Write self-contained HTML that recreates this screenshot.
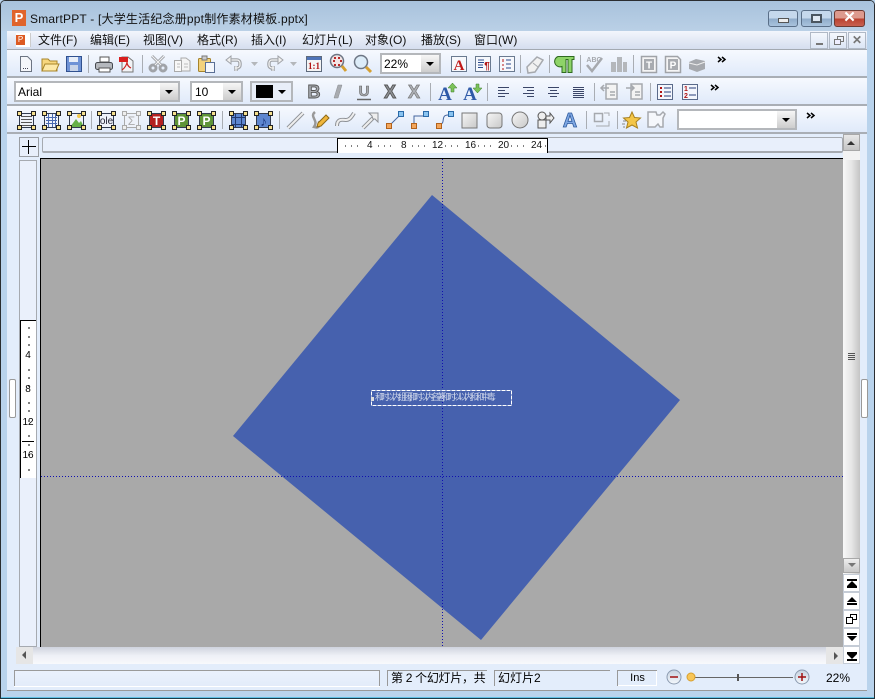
<!DOCTYPE html>
<html><head><meta charset="utf-8"><style>
html,body{margin:0;padding:0;width:875px;height:699px;overflow:hidden;background:#b9d3ec}
*{box-sizing:border-box}
div{position:absolute}
body{font-family:"Liberation Sans","Noto Sans CJK SC",sans-serif;color:#000}
.m{top:32px;font-size:12px;line-height:16px;white-space:nowrap;color:#101010}
.tb{left:7px;width:860px;background:linear-gradient(#f6f9fe,#e0eafa);border-bottom:2px solid #a9aeb5}
.cb{background:#fff;border:2px solid #b4b7bb}
.dd{position:absolute;top:0;right:0;bottom:0;width:18px;background:linear-gradient(#f6f6f6,#cdcdcd)}
.dd:after{content:"";position:absolute;left:5px;top:7px;border:4px solid transparent;border-top:4px solid #000;border-bottom:0}
.wb{top:10px;height:17px;border:1px solid #5a6f88;border-radius:3px}
.mb{top:32px;width:18px;height:17px;border:1px solid #b0b9c6;background:linear-gradient(#f5f8fd,#dbe5f5)}
.nv{left:843px;width:17px;height:18px;background:#fff;border:1px solid #c5ccd6}
</style></head><body>
<div style="left:0;top:0;width:875px;height:699px;background:#b9d3ec;border:1px solid #2a2d30;border-radius:5px 5px 0 0;border-bottom:1px solid #1c3b4a"></div>
<div style="left:1px;top:697px;width:873px;height:1px;background:#5fc0e4"></div>
<div style="left:1px;top:1px;width:873px;height:30px;background:linear-gradient(#a8c2dc,#bad0e6);border-radius:4px 4px 0 0"></div>
<div style="left:12px;top:10px;width:14px;height:16px;background:#e0642c;color:#fff;font-size:13px;font-weight:bold;line-height:15px;text-align:center">P</div>
<div style="left:30px;top:11px;font-size:12px;letter-spacing:.2px;line-height:16px;white-space:nowrap;color:#111">SmartPPT - [大学生活纪念册ppt制作素材模板.pptx]</div>
<div class="wb" style="left:768px;width:30px;background:linear-gradient(#c5d8ec 50%,#8eabc9 50%,#a9c3dd)"><div style="left:9px;top:7px;width:11px;height:5px;background:#eee;border:1px solid #555"></div></div>
<div class="wb" style="left:801px;width:31px;background:linear-gradient(#c5d8ec 50%,#8eabc9 50%,#a9c3dd)"><div style="left:9px;top:3px;width:11px;height:9px;border:2px solid #4a5560;background:#dfe8f2"></div></div>
<div class="wb" style="left:834px;width:31px;background:linear-gradient(#dd9a8e 50%,#b9402e 50%,#c86050);border-color:#6d3a32;color:#fff;font-weight:bold;font-size:15px;line-height:14px;text-align:center">✕</div>

<div style="left:7px;top:31px;width:860px;height:19px;background:linear-gradient(#f3f6fc,#d5deef);border-bottom:1px solid #a3a9b1"></div>
<div style="left:16px;top:33px;width:15px;height:14px;background:#fff;border-right:1px solid #ccc"><div style="left:0;top:2px;width:9px;height:10px;background:#dd5a22;color:#fff;font-size:8px;line-height:10px;text-align:center">P</div></div>
<div class="m" style="left:38px">文件(F)</div><div class="m" style="left:90px">编辑(E)</div><div class="m" style="left:143px">视图(V)</div><div class="m" style="left:197px">格式(R)</div><div class="m" style="left:251px">插入(I)</div><div class="m" style="left:302px">幻灯片(L)</div><div class="m" style="left:365px">对象(O)</div><div class="m" style="left:421px">播放(S)</div><div class="m" style="left:474px">窗口(W)</div>
<div class="mb" style="left:810px;font-size:0"><div style="left:5px;top:10px;width:7px;height:2px;background:#777"></div></div>
<div class="mb" style="left:829px"><div style="left:7px;top:3px;width:7px;height:6px;border:1px solid #777"></div><div style="left:4px;top:6px;width:7px;height:6px;border:1px solid #777;background:#eef"></div></div>
<div class="mb" style="left:848px;color:#777;font-size:12px;font-weight:bold;line-height:15px;text-align:center">✕</div>

<div class="tb" style="top:50px;height:28px"></div>
<div class="tb" style="top:78px;height:28px"></div>
<div class="tb" style="top:106px;height:28px"></div>
<div style="left:7px;top:134px;width:860px;height:532px;background:#e3edfb"></div>

<div class="cb" style="left:380px;top:53px;width:61px;height:21px"><div class="dd"></div><span style="position:absolute;left:2px;top:2px;font-size:12px;line-height:14px">22%</span></div>
<div class="cb" style="left:14px;top:81px;width:166px;height:21px"><div class="dd"></div><span style="position:absolute;left:2px;top:2px;font-size:12px;line-height:14px">Arial</span></div>
<div class="cb" style="left:190px;top:81px;width:53px;height:21px"><div class="dd"></div><span style="position:absolute;left:3px;top:2px;font-size:12px;line-height:14px">10</span></div>
<div class="cb" style="left:250px;top:81px;width:43px;height:21px;background:#e8eef8"><div class="dd" style="background:none"></div><div style="left:4px;top:2px;width:17px;height:13px;background:#000"></div></div>
<div class="cb" style="left:677px;top:109px;width:120px;height:21px"><div class="dd"></div></div>

<svg style="position:absolute;left:0;top:0" width="875" height="699" viewBox="0 0 875 699" font-family="Liberation Sans,sans-serif">
<!-- separators -->
<g stroke="#a9adb3" stroke-width="1">
<path d="M88.500 55V73M142.500 55V73M520.500 55V73M549.500 55V73M580.500 55V73M633.500 55V73"/>
<path d="M430.500 83V101M487.500 83V101M594.500 83V101M650.500 83V101"/>
<path d="M91.500 111V129M222.500 111V129M279.500 111V129M586.500 111V129M617.500 111V129"/>
</g>
<!-- row1 -->
<path d="M20.500 56.500h7l4 4v11H20.500z" fill="#f4f6fa" stroke="#6c7482"/><path d="M23 68.500h6" stroke="#445" stroke-dasharray="1 1"/>
<path d="M42 71V59h6l2 2h7v10z" fill="#f7d77e" stroke="#a8852a"/><path d="M42 71l3-7h14l-3 7z" fill="#fde9a8" stroke="#a8852a"/>
<rect x="66.500" y="56.500" width="15" height="15" fill="#6f93d6" stroke="#31518f"/><rect x="69" y="57" width="9" height="5" fill="#e8eef8"/><rect x="70" y="65" width="8" height="6" fill="#c8d4e8"/>
<rect x="95.500" y="62.500" width="17" height="7" rx="2" fill="#b5b8bd" stroke="#44484e"/><rect x="100" y="57" width="9" height="5" fill="#fff" stroke="#555"/><rect x="99" y="68" width="11" height="4" fill="#fff" stroke="#555"/>
<path d="M122 57h6l5 4v11h-11z" fill="#f2f3f6" stroke="#777"/><rect x="119" y="57" width="9" height="5" fill="#d81e1e"/><path d="M122 70c3-2 5-6 5-8 0 3 2 5 4 6" fill="none" stroke="#c22" stroke-width="1.200"/>
<g fill="none"><g stroke="#a0a3a8" stroke-width="3"><circle cx="153" cy="68" r="3"/><circle cx="163" cy="68" r="3"/><path d="M155 65l9-9M161 65l-9-9"/></g><g stroke="#f5f5f5" stroke-width="1"><path d="M155 65l9-9M161 65l-9-9"/></g></g>
<path d="M181 58h5l4 3v10h-9z" fill="#f4f4f4" stroke="#aaa"/><path d="M174.500 60.500h7l0 11h-7z" fill="#f8f8f8" stroke="#aaa"/><path d="M177 64h3M177 67h3M184 64h4M184 67h4" stroke="#bbb"/>
<rect x="198.500" y="58.500" width="12" height="13" rx="1" fill="#f3d27c" stroke="#a6842c"/><rect x="202" y="56" width="5" height="4" fill="#ccc" stroke="#777"/><rect x="205.500" y="62.500" width="9" height="10" fill="#f4f7fc" stroke="#5a6f95"/>
<g fill="none" stroke="#a0a3a8" stroke-width="3.500"><path d="M229 60h8a3 3 0 0 1 3 3v2a3 3 0 0 1-3 3h-2"/><path d="M236 66v5"/></g><g fill="none" stroke="#f4f4f4" stroke-width="1.200"><path d="M229 60h8a3 3 0 0 1 3 3v2a3 3 0 0 1-3 3h-2"/><path d="M236 66v5"/></g><path d="M231 56l-5 4 5 4z" fill="#f0f0f0" stroke="#a0a3a8"/>
<path d="M251 62h7l-3.500 4z" fill="#b4b7bb"/>
<g fill="none" stroke="#a0a3a8" stroke-width="3.500"><path d="M280 60h-8a3 3 0 0 0-3 3v2a3 3 0 0 0 3 3h2"/><path d="M273 66v5"/></g><g fill="none" stroke="#f4f4f4" stroke-width="1.200"><path d="M280 60h-8a3 3 0 0 0-3 3v2a3 3 0 0 0 3 3h2"/><path d="M273 66v5"/></g><path d="M278 56l5 4-5 4z" fill="#f0f0f0" stroke="#a0a3a8"/>
<path d="M290 62h7l-3.500 4z" fill="#b4b7bb"/>
<rect x="306.500" y="56.500" width="15" height="15" fill="#f4f4f4" stroke="#5e6a7c"/><rect x="307" y="57" width="14" height="3" fill="#4f74b8"/><text x="314" y="69" font-size="9" font-weight="bold" fill="#b21414" text-anchor="middle" font-family="Liberation Serif,serif">1:1</text>
<circle cx="337" cy="61" r="6.500" fill="#f3e4e4" stroke="#6d7684" stroke-width="1.500"/><g fill="#b92a2a"><rect x="334" y="57" width="2" height="2"/><rect x="338" y="57" width="2" height="2"/><rect x="333" y="60" width="2" height="2"/><rect x="340" y="60" width="2" height="2"/><rect x="334" y="64" width="2" height="2"/><rect x="338" y="64" width="2" height="2"/></g><path d="M342 66l4 5" stroke="#d5a032" stroke-width="3"/>
<circle cx="361" cy="62" r="6.500" fill="#dcecf8" stroke="#6d7684" stroke-width="1.500"/><path d="M366 67l5 5" stroke="#d5a032" stroke-width="3"/>
<rect x="451.500" y="56.500" width="15" height="15" fill="#f6f8fc" stroke="#6a7a90"/><text x="459" y="70" font-size="15" font-weight="bold" fill="#c01818" text-anchor="middle" font-family="Liberation Serif,serif">A</text>
<rect x="475.500" y="56.500" width="15" height="15" fill="#f6f8fc" stroke="#6a7a90"/><path d="M478 60h6M478 62.500h6M478 65h5M478 67.500h5" stroke="#2a4a8c"/><text x="487" y="69" font-size="10" font-weight="bold" fill="#b21414" text-anchor="middle">¶</text>
<rect x="499.500" y="56.500" width="15" height="15" fill="#f6f8fc" stroke="#6a7a90"/><path d="M503 59v3M503 64v2M503 68v2" stroke="#b21414"/><path d="M506 60h5M506 64h5M506 68h5" stroke="#2a4a8c"/>
<path d="M527 67l10-10 6 3-8 12-7 1z" fill="#f1f1f1" stroke="#a6a9ae" stroke-width="1.500"/><path d="M533 63l5 4" stroke="#a6a9ae"/>
<path d="M558 56.500h16v3h-2v13h-4V59.500h-2v13h-4v-6a5 5 0 0 1-4-10z" fill="#8ed468" stroke="#2f6a20"/>
<g fill="none" stroke="#a6a9ae" stroke-width="2.500"><path d="M587 65l5 6 10-13"/></g><text x="594" y="62" font-size="7" font-weight="bold" fill="#a6a9ae" text-anchor="middle">ABC</text>
<g fill="#b4b7bb"><rect x="611" y="62" width="5" height="10"/><rect x="617" y="57" width="5" height="15"/><rect x="623" y="62" width="4" height="10"/></g>
<path d="M641.500 56.500h15v16h-15z" fill="#f5f5f5" stroke="#a0a3a8" stroke-width="1.500"/><rect x="644" y="59" width="10" height="11" fill="#a8abb0"/><text x="649" y="68.500" font-size="10" font-weight="bold" fill="#fff" text-anchor="middle">T</text>
<path d="M665.500 56.500h12l3 3v13h-15z" fill="#f5f5f5" stroke="#a0a3a8" stroke-width="1.500"/><rect x="668" y="59" width="10" height="11" fill="#a8abb0"/><text x="673" y="68.500" font-size="10" font-weight="bold" fill="#fff" text-anchor="middle">P</text>
<path d="M689 62l7-3 9 2v8l-8 3-8-3z" fill="#a6a9ae"/><path d="M689 63l8 2 8-3" stroke="#eee" fill="none"/>
<g fill="none" stroke="#000" stroke-width="1.500"><path d="M718 57l3 2.500-3 2.500M722 57l3 2.500-3 2.500"/><path d="M711 85l3 2.500-3 2.500M715 85l3 2.500-3 2.500"/><path d="M807 113l3 2.500-3 2.500M811 113l3 2.500-3 2.500"/></g>
<!-- row2 -->
<text x="314" y="98" font-size="18" font-weight="bold" fill="#a8abb0" stroke="#555" stroke-width=".9" text-anchor="middle">B</text>
<path d="M334 98l4-13h4l-4 13z" fill="#a8abb0" stroke="#8a8d92" stroke-width=".5"/>
<text x="364" y="96" font-size="15" font-weight="bold" fill="#a8abb0" stroke="#666" stroke-width=".6" text-anchor="middle">U</text><path d="M357 99.500h14" stroke="#666" stroke-width="1.500"/>
<text x="390" y="98" font-size="18" font-weight="bold" fill="#8f9297" stroke="#555" stroke-width=".9" text-anchor="middle">X</text>
<text x="414" y="98" font-size="18" font-weight="bold" fill="#aeb1b6" stroke="#777" stroke-width=".7" text-anchor="middle">X</text>
<text x="445" y="100" font-size="19" font-weight="bold" fill="#2f5aa8" text-anchor="middle" font-family="Liberation Serif,serif">A</text><path d="M451 92h3v-4h3l-4.500-5-4.500 5h3z" fill="#7cc25a" stroke="#3a7a28" stroke-width=".5"/>
<text x="470" y="100" font-size="19" font-weight="bold" fill="#2f5aa8" text-anchor="middle" font-family="Liberation Serif,serif">A</text><path d="M476 84h3v4h3l-4.500 5-4.500-5h3z" fill="#7cc25a" stroke="#3a7a28" stroke-width=".5"/>
<g stroke="#3b4668" stroke-width="1">
<path d="M498 87.500h11M498 90.500h7M498 93.500h11M498 96.500h7"/>
<path d="M523 87.500h11M527 90.500h7M523 93.500h11M527 96.500h7"/>
<path d="M548 87.500h11M550 90.500h7M548 93.500h11M550 96.500h7"/>
<path d="M573 87.500h11M573 89.500h11M573 91.500h11M573 93.500h11M573 95.500h11M573 97.500h11"/>
</g>
<g fill="none" stroke="#a6a9ae" stroke-width="1.500"><rect x="606" y="84" width="11" height="15" fill="#f3f3f3"/><path d="M601 88h8M604 85l-3 3 3 3M610 92h5M610 95h5"/><rect x="631" y="84" width="11" height="15" fill="#f3f3f3"/><path d="M626 88h8M631 85l3 3-3 3M635 92h5M635 95h5"/></g>
<rect x="657.500" y="84.500" width="15" height="15" fill="#f3f6fc" stroke="#5a6a8a"/><path d="M660 87h2v2h-2zM660 91h2v2h-2zM660 95h2v2h-2z" fill="#b01414"/><path d="M664 88h7M664 92h7M664 96h7" stroke="#2a3f7a"/>
<rect x="682.500" y="84.500" width="15" height="15" fill="#f3f6fc" stroke="#5a6a8a"/><text x="686" y="91" font-size="7" font-weight="bold" fill="#b01414" text-anchor="middle">1</text><text x="686" y="98" font-size="7" font-weight="bold" fill="#b01414" text-anchor="middle">2</text><path d="M689 88h7M689 95h7" stroke="#2a3f7a"/>
<!-- row3 object boxes -->
<g fill="#eef2fa" stroke="#333c50">
<rect x="19.500" y="113.500" width="14" height="14"/><rect x="44.500" y="113.500" width="14" height="14"/><rect x="69.500" y="113.500" width="14" height="14"/>
<rect x="99.500" y="113.500" width="14" height="14"/><rect x="124.500" y="113.500" width="14" height="14" stroke="#aaa"/>
<rect x="149.500" y="113.500" width="14" height="14" fill="#b42020"/><rect x="174.500" y="113.500" width="14" height="14" fill="#5f9438"/><rect x="199.500" y="113.500" width="14" height="14" fill="#5f9438"/>
<rect x="231.500" y="113.500" width="14" height="14" fill="#5d86d0"/><rect x="256.500" y="113.500" width="14" height="14" fill="#5d86d0"/>
</g>
<path d="M21 116.500h11M21 119.500h11M21 122.500h11M21 125.500h11" stroke="#555"/>
<path d="M46 117.500h11M46 120.500h11M46 123.500h11M48.500 114v13M52.500 114v13M55.500 114v13" stroke="#4a6ab0"/>
<path d="M70 127l6-8 3 4 2-2 3 6z" fill="#66b048"/><circle cx="79" cy="116" r="2" fill="#f2c84b"/>
<text x="106.500" y="124" font-size="10" text-anchor="middle" fill="#223">ole</text>
<text x="131.500" y="125" font-size="12" text-anchor="middle" fill="#aaa">Σ</text>
<text x="156.500" y="125" font-size="12" font-weight="bold" fill="#fff" text-anchor="middle">T</text>
<text x="181.500" y="125" font-size="12" font-weight="bold" fill="#fff" text-anchor="middle">P</text>
<text x="206.500" y="125" font-size="12" font-weight="bold" fill="#fff" text-anchor="middle">P</text>
<path d="M232 117.500h13M232 124.500h13M235.500 114v13M241.500 114v13" stroke="#223a70"/>
<text x="263.500" y="126" font-size="14" fill="#1f3a80" text-anchor="middle">♪</text>
<g fill="#f6e08e" stroke="#222" stroke-width="1">
<path d="M17.500 111.500h4v4h-4zM31.500 111.500h4v4h-4zM17.500 125.500h4v4h-4zM31.500 125.500h4v4h-4z"/>
<path d="M42.500 111.500h4v4h-4zM56.500 111.500h4v4h-4zM42.500 125.500h4v4h-4zM56.500 125.500h4v4h-4z"/>
<path d="M67.500 111.500h4v4h-4zM81.500 111.500h4v4h-4zM67.500 125.500h4v4h-4zM81.500 125.500h4v4h-4z"/>
<path d="M97.500 111.500h4v4h-4zM111.500 111.500h4v4h-4zM97.500 125.500h4v4h-4zM111.500 125.500h4v4h-4z"/>
<path d="M147.500 111.500h4v4h-4zM161.500 111.500h4v4h-4zM147.500 125.500h4v4h-4zM161.500 125.500h4v4h-4z"/>
<path d="M172.500 111.500h4v4h-4zM186.500 111.500h4v4h-4zM172.500 125.500h4v4h-4zM186.500 125.500h4v4h-4z"/>
<path d="M197.500 111.500h4v4h-4zM211.500 111.500h4v4h-4zM197.500 125.500h4v4h-4zM211.500 125.500h4v4h-4z"/>
<path d="M229.500 111.500h4v4h-4zM243.500 111.500h4v4h-4zM229.500 125.500h4v4h-4zM243.500 125.500h4v4h-4z"/>
<path d="M254.500 111.500h4v4h-4zM268.500 111.500h4v4h-4zM254.500 125.500h4v4h-4zM268.500 125.500h4v4h-4z"/>
</g>
<path d="M122.500 111.500h4v4h-4zM136.500 111.500h4v4h-4zM122.500 125.500h4v4h-4zM136.500 125.500h4v4h-4z" fill="#eee" stroke="#aaa"/>
<path d="M288 128l15-15" stroke="#8e9196" stroke-width="4"/><path d="M288 128l15-15" stroke="#eee" stroke-width="2"/>
<path d="M315 112c-6 5 4 8-1 15 6 2 6-3 5-6" fill="none" stroke="#999" stroke-width="2.500"/><path d="M318 123l8-8 3 3-8 8-4 1z" fill="#f0b63c" stroke="#8e6a18"/>
<path d="M337 126c0-8 6-6 9-6s5-2 8-7" fill="none" stroke="#8e9196" stroke-width="4"/><path d="M337 126c0-8 6-6 9-6s5-2 8-7" fill="none" stroke="#eee" stroke-width="2"/>
<path d="M363 128l10-10" stroke="#8e9196" stroke-width="4"/><path d="M363 128l10-10" stroke="#eee" stroke-width="2"/><path d="M369 113h9v9l-3-3-2 0-1-3z" fill="#eee" stroke="#8e9196"/>
<path d="M390 125l10-10" stroke="#44659e"/>
<path d="M414 124v-8h9" fill="none" stroke="#44659e"/><path d="M440 124c6 0 0-9 8-9" fill="none" stroke="#44659e"/>
<g fill="#f3a65c" stroke="#b2621c"><rect x="386.500" y="123.500" width="5" height="5"/><rect x="411.500" y="123.500" width="5" height="5"/><rect x="436.500" y="123.500" width="5" height="5"/></g>
<g fill="#8ac4f0" stroke="#2a6aa8"><rect x="398.500" y="111.500" width="5" height="5"/><rect x="423.500" y="111.500" width="5" height="5"/><rect x="448.500" y="111.500" width="5" height="5"/></g>
<defs><linearGradient id="g" x1="0" y1="0" x2="1" y2="1"><stop offset="0" stop-color="#f6f6f6"/><stop offset="1" stop-color="#c8c8c8"/></linearGradient></defs>
<rect x="462" y="113" width="15" height="15" fill="url(#g)" stroke="#777"/>
<rect x="487" y="113" width="15" height="15" rx="3" fill="url(#g)" stroke="#777"/>
<circle cx="520" cy="120" r="8" fill="url(#g)" stroke="#777"/>
<circle cx="542" cy="116" r="4" fill="#eee" stroke="#555"/><rect x="538" y="120" width="8" height="8" fill="#eee" stroke="#555"/><path d="M546 116h4v-3l4 5-4 5v-3h-4z" fill="#eee" stroke="#555"/>
<text x="570" y="127" font-size="20" font-weight="bold" fill="#7fa8e4" stroke="#2e5a9c" stroke-width=".8" text-anchor="middle">A</text>
<g fill="none" stroke="#a6a9ae"><rect x="594.500" y="113.500" width="8" height="8" stroke-width="1.500"/><path d="M604 113h5v3M596 126h13v-5"/></g>
<path d="M632 112l2.500 5.500 6 .5-4.500 4 1.500 6-5.500-3-5.500 3 1.500-6-4.500-4 6-.5z" fill="#f4c648" stroke="#a8801e"/><path d="M623 121h3M622 124h3M623 127h2" stroke="#888"/>
<path d="M648 112h8l1 3h3l3-3 2 2-2 4v9h-3l-2-3-3 3h-7z" fill="#f5f7fb" stroke="#a6a9ae" stroke-width="1.500"/>
</svg>

<!-- ruler corner & h ruler -->
<div style="left:19px;top:137px;width:20px;height:20px;background:#e8effb;border:1px solid #9a9ea4"><div style="left:2px;top:8px;width:14px;height:1px;background:#000"></div><div style="left:8px;top:2px;width:1px;height:14px;background:#000"></div></div>
<div style="left:42px;top:137px;width:801px;height:16px;background:#e8effb;border:1px solid #a6aab0;border-bottom:2px solid #a6aab0;border-radius:2px"></div>
<div style="left:337px;top:138px;width:211px;height:15px;background:#fff;border:1px solid #000;border-width:1px 1px 0 1px"></div>
<div style="left:337px;top:139px;width:211px;height:14px;font-size:10px;line-height:14px;white-space:pre;color:#111"><span style="position:absolute;left:30px">4</span><span style="position:absolute;left:64px">8</span><span style="position:absolute;left:95px">12</span><span style="position:absolute;left:128px">16</span><span style="position:absolute;left:161px">20</span><span style="position:absolute;left:194px">24</span></div>
<svg style="position:absolute;left:337px;top:139px" width="211" height="14"><path d="M8 7h1M14 7h1M20 7h1M41 7h1M47 7h1M53 7h1M75 7h1M81 7h1M87 7h1M108 7h1M114 7h1M120 7h1M141 7h1M147 7h1M153 7h1M174 7h1M180 7h1M186 7h1M208 7h1" stroke="#000"/></svg>
<div style="left:41px;top:158px;width:803px;height:1px;background:#000"></div>

<!-- v ruler -->
<div style="left:19px;top:160px;width:18px;height:487px;background:#eaf0fb;border:1px solid #a6aab0"></div>
<div style="left:20px;top:320px;width:16px;height:158px;background:#fff;border-top:1px solid #000;border-left:1px solid #000"></div>
<div style="left:22px;top:441px;width:12px;height:1px;background:#000"></div>
<div style="left:20px;top:350px;width:16px;font-size:10px;line-height:11px;text-align:center">4</div>
<div style="left:20px;top:384px;width:16px;font-size:10px;line-height:11px;text-align:center">8</div>
<div style="left:20px;top:417px;width:16px;font-size:10px;line-height:11px;text-align:center">12</div>
<div style="left:20px;top:450px;width:16px;font-size:10px;line-height:11px;text-align:center">16</div>
<svg style="position:absolute;left:20px;top:320px" width="16" height="158"><path d="M8 8h2M8 17h2M8 25h2M8 50h2M8 58h2M8 66h2M8 83h2M8 91h2M8 101h2M8 116h2M8 125h2M8 135h2M8 150h2" stroke="#000"/></svg>
<div style="left:40px;top:158px;width:1px;height:489px;background:#000"></div>

<!-- canvas -->
<div style="left:41px;top:159px;width:802px;height:488px;background:#a9a9a9"></div>
<svg style="position:absolute;left:41px;top:159px" width="802" height="488">
<polygon points="391,36 639,241 440,481 192,277" fill="#4661ae"/>
<path d="M401.500 0V488" stroke="#1010b0" stroke-dasharray="1 2"/>
<path d="M0 317.500H802" stroke="#1010b0" stroke-dasharray="1 2"/>
<rect x="330.500" y="231.500" width="140" height="15" fill="none" stroke="#fff" stroke-dasharray="4 1"/>
<rect x="330" y="238" width="3" height="4" fill="#ddd"/>
<text x="334" y="241" font-size="9" fill="#c6cfe6" font-family="Noto Sans CJK SC,sans-serif" textLength="120">和时以内组团,和时以内名著,和时以以内和和中毒.</text>
</svg>

<!-- h scrollbar -->
<div style="left:16px;top:647px;width:827px;height:17px;background:linear-gradient(#cfd3de,#eef0f6 50%,#f8f9fc)"></div>
<div style="left:16px;top:647px;width:17px;height:17px;background:#e6e6e6"></div>
<svg style="position:absolute;left:20px;top:650px" width="10" height="10"><path d="M6 1L2 5l4 4z" fill="#555"/></svg>
<div style="left:826px;top:647px;width:17px;height:17px;background:#e6e6e6"></div>
<svg style="position:absolute;left:831px;top:651px" width="10" height="10"><path d="M3 1l4 4-4 4z" fill="#555"/></svg>

<!-- v scrollbar -->
<div style="left:843px;top:134px;width:17px;height:442px;background:linear-gradient(90deg,#f8f8f8,#e6e6e6 50%,#c4c4c4)"></div>
<div style="left:843px;top:134px;width:17px;height:17px;background:linear-gradient(#e8e8e8,#c4c4c4);border:1px solid #a8a8a8"></div>
<svg style="position:absolute;left:846px;top:139px" width="10" height="8"><path d="M1 6l4-4 4 4z" fill="#333"/></svg>
<div style="left:843px;top:151px;width:17px;height:9px;background:#f2f2f2"></div>
<div style="left:848px;top:353px;width:7px;height:1px;background:#555;box-shadow:0 2px #555,0 4px #555,0 6px #555"></div>
<div style="left:843px;top:558px;width:17px;height:15px;background:linear-gradient(#eee,#c8c8c8);border:1px solid #a8a8a8"></div>
<svg style="position:absolute;left:847px;top:562px" width="10" height="8"><path d="M1 1l4 4 4-4z" fill="#777"/></svg>
<div class="nv" style="top:574px"></div><div class="nv" style="top:592px"></div><div class="nv" style="top:610px"></div><div class="nv" style="top:628px"></div><div class="nv" style="top:646px"></div>
<svg style="position:absolute;left:843px;top:574px" width="17" height="90"><g fill="#000"><path d="M4 5h10v2H4zM9 7l5 5H4zM4 12h10v2H4z"/><path d="M9 23l5 5H4zM4 29h10v2H4z"/><path d="M4 59h10v2H4zM4 62h10l-5 5z"/><path d="M4 78h10v2H4zM4 80h10l-5 5zM4 85h10v2H4z"/></g><g fill="none" stroke="#000"><rect x="7.500" y="40.500" width="6" height="5"/><rect x="3.500" y="43.500" width="6" height="6" fill="#fff"/></g></svg>

<!-- side grips -->
<div style="left:9px;top:379px;width:7px;height:39px;background:#fff;border:1px solid #999;border-radius:2px"></div>
<div style="left:861px;top:379px;width:7px;height:39px;background:#fff;border:1px solid #999;border-radius:2px"></div>

<!-- status -->
<div style="left:7px;top:664px;width:860px;height:27px;background:#e3edfb;border-bottom:1px solid #999"></div>
<div style="left:14px;top:670px;width:366px;height:16px;background:linear-gradient(#eaf1fc,#e3ecfa);border:1px solid #9a9a9a;border-width:1px 1px 0 1px;box-shadow:0 1px #fff"></div>
<div style="left:387px;top:670px;width:100px;height:16px;border-left:1px solid #999;border-top:1px solid #999;font-size:12px;letter-spacing:-.3px;line-height:15px;padding-left:3px;white-space:nowrap;overflow:hidden">第 2 个幻灯片，共</div>
<div style="left:494px;top:670px;width:116px;height:16px;border-left:1px solid #999;border-top:1px solid #999;font-size:12px;line-height:15px;padding-left:3px;white-space:nowrap">幻灯片2</div>
<div style="left:617px;top:670px;width:40px;height:16px;border:1px solid #999;border-width:1px 0 0 1px;box-shadow:inset -1px -1px #fff;font-size:11px;line-height:15px;text-align:center">Ins</div>
<svg style="position:absolute;left:660px;top:664px" width="160" height="26">
<defs><linearGradient id="c" x1="0" y1="0" x2="0" y2="1"><stop offset="0" stop-color="#c6d2e0"/><stop offset="1" stop-color="#f4f8fc"/></linearGradient></defs>
<path d="M27 13.500H133" stroke="#666"/><path d="M78 10v7" stroke="#555" stroke-width="2"/>
<circle cx="14" cy="13" r="7" fill="url(#c)" stroke="#8c9bb0"/><path d="M10 13h8" stroke="#a01010" stroke-width="1.500"/>
<circle cx="142" cy="13" r="7" fill="url(#c)" stroke="#8c9bb0"/><path d="M138 13h8M142 9v8" stroke="#a01010" stroke-width="1.500"/>
<circle cx="31" cy="13" r="4" fill="#f8c658" stroke="#d8a030"/>
</svg>
<div style="left:826px;top:671px;font-size:12px;line-height:14px">22%</div>
</body></html>
